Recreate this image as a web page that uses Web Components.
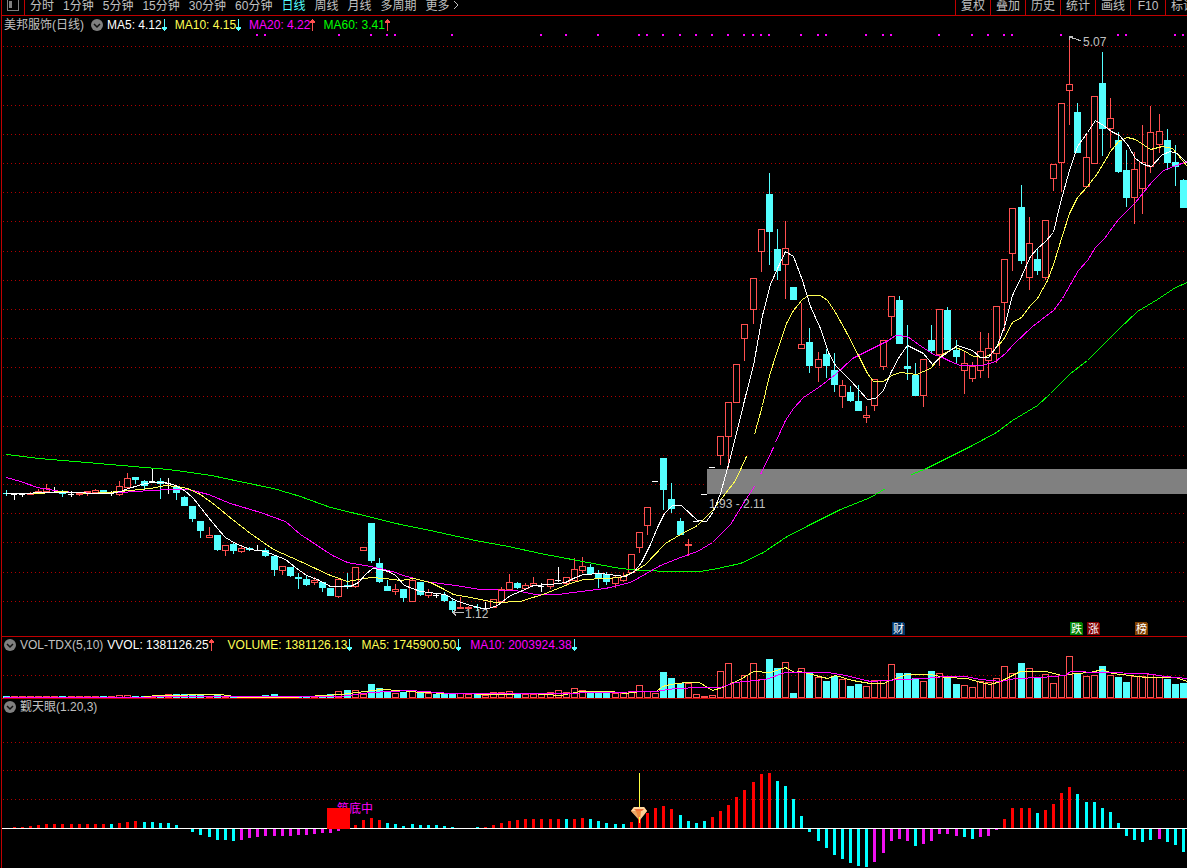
<!DOCTYPE html>
<html lang="zh-CN">
<head>
<meta charset="utf-8">
<title>美邦服饰(日线)</title>
<style>
html, body { margin: 0; background: #000; }
body { font: 12px/12px "Liberation Sans", "Noto Sans CJK SC", sans-serif; color: #c0c0c0; overflow-x: hidden; }
</style>
</head>
<body>
<tdx-app></tdx-app>
<script>
const RED = '#ff5050', CYAN = '#54ffff', WHITE = '#ffffff', YELLOW = '#ffff54', MAG = '#ff00ff', GREEN = '#00ff00';
const slotX = i => Math.floor(6.05 + 8.12 * i);

/* price bars: kind, high, body top, body bottom, low */
const BARS = `c490 493 494 496,w494 494 495 500,w494 494 495 497,r492 493 495 495,r489 491 493 493,r484 488 492 492,w487 492 493 493,c490 491 494 497,w491 494 495 497,r493 493 495 496,r491 491 493 496,r489 490 493 493,c490 490 493 494,w491 493 494 496,r481 486 495 496,r473 478 488 488,c477 477 480 484,c480 481 486 490,w468 481 482 482,c478 481 484 499,
w478 483 484 494,c486 486 493 500,c496 497 506 506,c506 506 519 522,c521 521 531 538,r527 535 538 538,c535 535 550 551,r545 545 551 556,c542 544 551 554,r545 548 552 553,c547 548 550 551,w545 550 551 551,c548 550 556 557,c555 556 570 576,r566 566 571 575,c567 567 576 577,c573 577 579 589,c575 579 585 586,r577 580 583 585,c582 582 588 592,
c588 588 596 596,r579 579 597 598,c573 585 587 589,r567 567 587 588,r547 547 551 551,c523 523 561 563,c558 563 582 583,c580 586 591 591,r584 589 592 595,c589 589 598 602,r579 580 602 602,c582 582 595 596,r589 592 596 598,w593 595 596 598,c592 595 601 602,c598 601 610 613,r597 607 609 609,r606 607 609 609,c604 607 608 611,w602 608 609 609,
r599 599 608 608,r587 589 602 602,r574 582 590 590,c582 583 588 589,r583 585 589 590,r577 583 586 586,w583 586 587 592,r579 579 587 589,w567 580 581 582,r577 577 584 586,r558 569 581 581,r557 566 571 573,c564 567 574 575,c570 573 579 588,c572 574 582 585,r575 577 584 588,r573 576 581 582,r554 554 573 573,r532 532 548 553,r507 507 526 535,
w481 481 482 482,c458 458 490 510,c483 499 509 513,c518 521 535 535,r539 544 546 556,w521 521 522 522,w494 494 495 495,w467 467 468 468,r436 436 456 465,r402 402 437 468,r364 364 403 403,r324 324 339 361,r278 278 310 324,r229 229 252 272,c173 194 232 265,c229 249 271 280,r221 248 265 299,c287 287 300 300,r303 344 349 349,c328 342 366 373,
r352 359 368 382,c349 354 366 378,c353 370 385 392,r380 385 397 408,c386 392 401 402,c385 401 411 411,r406 415 418 423,r379 379 406 411,r340 340 367 370,r296 296 317 336,c296 300 344 344,c325 366 369 380,c363 375 396 396,r359 359 396 407,c325 340 351 353,r309 309 355 366,c307 310 350 350,c340 350 357 363,r351 363 371 394,r362 366 379 382,
r332 351 371 378,r333 348 361 378,r306 306 354 363,r259 259 303 331,r208 208 254 271,c185 207 261 264,r217 243 278 290,c249 259 271 275,r220 220 278 280,r164 164 179 191,r103 103 163 192,r38 84 91 125,c103 112 153 153,r135 157 187 187,r96 96 164 164,c52 83 129 156,r98 118 129 148,c132 140 172 173,c150 170 198 207,r152 169 198 224,
r125 162 189 214,r106 132 167 173,r114 131 145 153,c129 140 163 170,c145 162 167 186,c179 180 208 208`
  .split(',').map(s => { s = s.trim(); return [s[0], ...s.slice(1).split(' ').map(Number)]; });

/* volume bars: y of each bar's top */
const VOLS = `696 696 696 696 696 696 696 696 696 696 696 696 696 696 695 695 696 696 696 696 694 694 694 695 695 696 695 696 696 696 696 696 695 694 696 696 696 696 696 696
694 691 690 690 694 684 688 691 693 692 691 692 693 694 693 693 693 694 694 695 692 692 691 694 694 694 694 692 690 692 688 690 692 692 693 693 693 692 685 691
693 672 678 683 683 694 696 695 671 663 682 675 663 679 659 668 662 693 668 672 677 681 676 679 686 684 686 680 680 664 673 673 678 681 671 673 676 684 685 687
681 682 678 666 673 663 668 678 674 683 675 656 674 676 675 666 675 677 682 676 676 674 677 679 684 683`.split(/\s+/).map(Number);

/* oscillator: height in px with colour (r red, c cyan, m magenta) */
const OSC = `r0 r1 r1 r2 r3 r4 r4 r4 r4 r4 r4 r4 r4 c4 r5 r6 r7 c6 c6 c5 c5 c3 c0 c-3 c-6 c-8 c-11 c-11 c-12 m-11 m-9 m-8 m-7 m-7 m-7 m-7 m-6 m-6 m-5 m-4 m-4 m-2 r0 r3 r8 r10 r8 c5 c4 c2 c4 c3 c3 c3 c2 c1 c0 c0 c1 r1 r3 r5 r7 r8 r9 r9 r9 r9 r9 c9 r9 r10 c9 c7 c5 c4 c4 r6 r10 r15
r20 r22 r19 c13 c7 c5 c7 r11 r17 r23 r31 r38 r46 r54 r55 c47 c42 c29 c12 c-3 c-12 c-19 c-26 c-30 c-34 c-37 c-38 m-33 m-24 m-12 m-10 m-12 c-17 m-15 m-12 m-5 m-5 m-7 c-8 c-10 m-8 m-7 m-1 r9 r20 r20 r20 c15 r18 r24 r35 r41 c34 c26 c26 c20 c16 c5 c-7 c-11 c-13 c-11 m-10 c-13 c-16 c-23`
  .split(/\s+/).map(s => [s[0], Number(s.slice(1))]);

const PRICE_LINES = [
  [GREEN, '6,454 38,458 75,461 109,464 133,466 168,469 190,472 211,475 239,481 273,488 300,496 330,507 355,513 400,524 430,530 475,540 508,546 540,553 598,564 620,568 640,570 672,571 700,571 717,568 740,563 763,552 785,537 810,524 840,509 870,497 885,488'],
  [GREEN, '911,474 926,468 970,446 996,432 1012,420 1037,405 1050,393 1070,373 1087,360 1118,329 1137,311 1157,299 1175,287 1187,282'],
  [MAG, '6,477 20,481 37,487 60,491 95,493 120,492 150,490 170,489 188,489 208,494 230,503 260,512 285,521 300,534 332,555 347,562 370,566 392,571 403,575 425,581 455,585 480,589 515,590 535,594 558,594 580,591 605,588 630,582 660,565 680,557 697,551 712,542 730,524 746,498 754,486'],
  [MAG, '760,474 773,447'],
  [MAG, '775,442 785,420 793,408 803,397 818,387 835,374 852,358 868,350 888,340 895,335 907,336 918,344 933,354 940,356 950,361 960,365 982,365 995,361 1005,353 1013,344 1032,326 1053,310 1062,298 1078,270 1087,260 1095,247 1104,238 1112,227 1118,219 1135,202 1151,182 1163,170 1173,166 1187,161'],
  [YELLOW, '6,493 40,493 60,491 90,493 120,491 150,488 165,485 175,486 187,488 200,494 215,505 232,519 250,533 273,549 300,561 315,568 330,575 347,581 370,577 385,578 400,580 413,578 430,582 442,588 453,594 470,597 495,602 520,601 545,593 570,583 583,579 605,578 620,577 634,571 645,564 665,543 680,534 697,525 712,510 735,480 746,456'],
  [YELLOW, '754,434 762,405 769,375 777,350 786,323 793,310 802,299 808,295 820,295 827,300 835,312 845,330 858,355 867,373 873,381 883,381 891,375 900,372 916,374 930,368 942,354 955,347 963,350 973,356 983,357 990,354 1003,339 1012,322 1021,317 1030,305 1037,298 1047,280 1053,264 1062,235 1069,213 1077,197 1087,186 1097,173 1110,151 1118,141 1127,137 1135,139 1150,149 1162,146 1172,148 1187,166'],
  [WHITE, '6,493 60,492 110,493 120,491 128,488 145,483 152,482 165,482 175,485 184,490 193,498 208,517 217,528 225,537 235,543 250,549 265,551 275,555 285,559 295,567 306,575 317,579 330,586 350,586 358,582 365,574 372,568 380,569 388,571 395,575 404,585 420,591 445,594 455,600 467,604 485,609 497,605 510,595 520,591 533,585 550,584 565,582 575,577 583,574 600,573 625,576 634,571 641,562 650,544 657,527 664,513 672,505 681,505 697,520 706,521 713,511 720,493 727,468 735,437 744,400 753,365 762,315 770,284 778,266 785,251 793,256 802,280 810,306 820,328 828,352 835,365 850,380 867,399 875,398 883,390 890,373 899,356 907,345 923,353 932,364 940,357 950,350 957,345 972,350 980,357 988,357 997,345 1004,326 1012,295 1022,274 1030,256 1037,248 1045,241 1053,232 1060,202 1069,170 1077,146 1087,132 1095,120 1103,125 1111,131 1119,135 1127,144 1135,158 1143,164 1151,166 1162,154 1170,151 1177,153 1187,163']
];
const VOL_LINES = [
  [YELLOW, '4,697 140,697 155,695 220,694 240,697 290,697 340,694 365,691 380,689 400,690 420,692 450,693 500,694 530,693 560,695 580,691 611,691 625,693 640,691 656,691 662,686 670,684 685,682 699,682 712,690 722,687 740,679 753,671 770,672 785,667 794,672 800,671 815,675 827,678 835,675 852,680 870,683 883,683 890,680 907,674 930,674 945,677 967,678 980,682 990,684 1000,681 1020,671 1045,671 1062,675 1075,673 1090,672 1102,669 1112,673 1130,675 1145,677 1175,677 1187,681'],
  [MAG, '4,697 300,696 340,696 370,692 410,690 450,693 500,693 560,693 600,692 655,691 675,688 700,687 720,687 735,682 765,679 785,672 827,672 845,675 870,681 900,679 925,678 945,676 965,676 980,679 1000,681 1015,678 1040,677 1065,675 1070,671 1100,672 1145,673 1165,676 1187,678']
];
const SIGNAL_DOTS = [256,264,338,370,386,394,451,540,565,597,638,646,662,679,695,711,727,743,752,760,768,800,817,825,865,882,890,938,971,987,1003,1011,1060,1117,1125,1174,1182];

const rect = (x, y, w, h, f) => `<rect x="${x}" y="${y}" width="${w}" height="${h}" fill="${f}"/>`;
const hollow = (x, y, w, h) => h < 3 ? rect(x, y, w, h, RED) : rect(x, y, w, h, RED) + rect(x + 1, y + 1, w - 2, h - 2, '#000');
const grid = ys => ys.map(y => `<path d="M3 ${y + .5}H1187" stroke="#b00000" stroke-dasharray="1 3"/>`).join('');
const lines = list => list.map(([c, p]) => `<polyline points="${p}" fill="none" stroke="${c}" transform="translate(.5 .5)"/>`).join('');
const svg = (top, height, label, body) => `<style>
  :host { display: block; }
  svg { display: block; width: 100%; height: auto; font: 12px "Liberation Sans", "Noto Sans CJK SC", sans-serif; }
  </style><svg viewBox="2 ${top} 1185 ${height}" role="img" aria-label="${label}" shape-rendering="crispEdges">${body}</svg>`;

function define(name, render) {
  customElements.define(name, class extends HTMLElement {
    connectedCallback() {
      if (!this.shadowRoot) this.attachShadow({ mode: 'open' }).innerHTML = render(this);
    }
  });
}

define('tdx-kline', () => {
  const bars = BARS.map(([k, hi, t, b, lo], i) => {
    const x = slotX(i), c = k === 'r' ? RED : k === 'c' ? CYAN : WHITE;
    const wick = rect(x, hi, 1, lo - hi, c);
    return wick + (k === 'r' ? hollow(x - 3, t, 7, b - t) : rect(x - 3, t, k === 'w' ? 6 : 7, b - t, c));
  }).join('');
  const badge = (x, c, s) => `<path d="M${x} 622h11l2 2v11h-13z" fill="${c}"/><text x="${x + 1}" y="633" font-size="11" fill="#fff">${s}</text>`;
  return svg(34, 602, '日线',
    grid([46,75,105,134,163,192,221,251,280,309,338,367,396,426,455,484,513,542,572,601]) +
    SIGNAL_DOTS.map(x => rect(x, 34, 2, 2, MAG)).join('') +
    rect(707, 469, 480, 25, '#808080') + bars + lines(PRICE_LINES) +
    `<g fill="#c0c0c0"><text x="1083" y="46">5.07</text><text x="709" y="508">1.93 - 2.11</text><text x="465" y="618">1.12</text></g>
    <g fill="none" stroke="#c0c0c0"><path d="M1069.500 40V36.500H1073M1070 37.500L1075 38.500L1081 41"/><path d="M464 612.500H453M456 609.500L453 612.500L456 615.500"/></g>` +
    badge(892, '#003468', '财') + badge(1070, '#008000', '跌') + badge(1087, '#800000', '涨') + badge(1135, '#804000', '榜'));
});

define('tdx-volume', () => svg(654, 44, 'VOL-TDX', grid([675]) +
  VOLS.map((y, i) => {
    const x = slotX(i) - 3;
    return BARS[i][0] === 'c' || i === 53 ? rect(x, y, 7, 698 - y, CYAN) : hollow(x, y, 7, 698 - y);
  }).join('') + lines(VOL_LINES)));

define('tdx-osc', () => svg(716, 152, '觐天眼', grid([742, 770, 799]) +
  OSC.map(([k, v], i) => rect(slotX(i) - 1, v > 0 ? 828 - v : 829, 3, Math.abs(v), { r: '#f00', c: '#0ff', m: '#f010f0' }[k])).join('') +
  rect(2, 828, 1185, 1, '#fff') +
  `<text x="337" y="813" fill="${MAG}">筑底中</text>` + rect(327, 808, 23, 21, '#f00') +
  rect(639, 773, 1, 50, '#ffff40') +
  `<g shape-rendering="auto"><path d="M634 807H644L647 811L639.500 820L631 811Z" fill="#f08a3c"/>
   <path d="M634 807H644L647 811H631Z" fill="#ffd9a0"/><path d="M634 809H644L642 811H636Z" fill="#f0703a"/>
   <path d="M631 811L639 820L636 811Z" fill="#e8a868"/><path d="M641 811H647L640 820Z" fill="#f8d098"/></g>` + rect(639, 817, 1, 6, '#ffff40')));

define('tdx-value', el => `<style>
  :host { display: inline-flex; align-items: center; white-space: nowrap; }
  svg { display: block; }
  </style><slot></slot><svg width="5" height="12" viewBox="0 0 5 12" shape-rendering="crispEdges" aria-hidden="true">${
    el.getAttribute('dir-to') === 'up'
      ? `<path d="M2 0h1v1h1v1h1v2H3v8H2V4H0V2h1V1h1z" fill="${RED}"/>`
      : `<path d="M2 0h1v8h2v2H4v1H3v1H2v-1H1v-1H0V8h2z" fill="${CYAN}"/>`}</svg>`);

define('tdx-panel', () => `<style>
  :host { display: block; margin-left: 1px; border-left: 1px solid #c00000; }
  :host([ruled]) { border-top: 1px solid #c00000; }
  header { box-sizing: border-box; display: flex; align-items: center; height: 18px; padding-left: 2px; white-space: nowrap; overflow: hidden; }
  .lead { display: flex; align-items: center; gap: 7px; margin-right: 4px; }
  ::slotted([slot=value]) { margin-right: 8px; }
  :host([ruled]) header { height: 17px; padding-bottom: 2px; }
  :host([ruled]) .lead { flex-direction: row-reverse; gap: 4px; }
  :host([ruled]) ::slotted([slot=value]) { margin-right: 9px; }
  button { display: block; padding: 0; border: 0; background: none; width: 12px; height: 12px; }
  button svg { display: block; }
  </style><header><span class="lead"><slot name="title"></slot><button type="button" aria-label="菜单"><svg width="12" height="12" viewBox="0 0 12 12"><circle cx="6" cy="6" r="6" fill="#808080"/><path d="M3 5L6 8L9 5" fill="none" stroke="#111" stroke-width="1.500"/></svg></button></span><slot name="value"></slot></header><slot></slot>`);

define('tdx-toolbar', () => {
  const tabs = ['分时','1分钟','5分钟','15分钟','30分钟','60分钟','日线','周线','月线','多周期'];
  const tools = ['复权','叠加','历史','统计','画线','F10','标记'];
  return `<style>
  :host { display: flex; height: 15px; border-bottom: 1px solid #c00000; margin-left: 1px; border-left: 1px solid #c00000; }
  button { flex: none; padding: 0; border: 0; background: none; color: #c0c0c0; font: inherit; height: 15px; line-height: 13px; display: flex; align-items: flex-start; justify-content: center; white-space: nowrap; }
  .side { width: 23px; border-right: 1px solid #c00000; }
  .side svg { display: block; }
  nav { display: flex; flex: 1; gap: 9px; padding-left: 5px; min-width: 0; }
  .on { color: #54ffff; }
  .more { gap: 3px; }
  .tools { display: flex; width: 232px; overflow: hidden; }
  .tools button { width: 35px; border-left: 1px solid #c00000; }
  </style><button class="side" type="button" aria-label="侧栏"><svg width="12" height="11" viewBox="0 0 12 11" shape-rendering="crispEdges"><rect x="0" y="-2" width="11" height="12" fill="none" stroke="#808080"/><rect x="2" y="1" width="3" height="7" fill="#808080"/></svg></button>
  <nav>${tabs.map(t => `<button type="button"${t === '日线' ? ' class="on"' : ''}>${t}</button>`).join('')}<button type="button" class="more">更多<svg width="6" height="11" viewBox="0 0 6 11"><path d="M1 1L5 5L1 9" fill="none" stroke="#c0c0c0"/></svg></button></nav>
  <div class="tools">${tools.map(t => `<button type="button">${t}</button>`).join('')}</div>`;
});

define('tdx-app', () => `<style>
  :host { display: block; background: #000; }
  .w { color: #fff; } .y { color: #ffff54; } .m { color: #f0f; } .g { color: #0f0; }
  .gap { margin-right: 14px; }
  </style>
  <tdx-toolbar></tdx-toolbar>
  <tdx-panel>
    <span slot="title">美邦服饰(日线)</span>
    <tdx-value slot="value" class="w">MA5: 4.12</tdx-value>
    <tdx-value slot="value" class="y">MA10: 4.15</tdx-value>
    <tdx-value slot="value" class="m" dir-to="up">MA20: 4.22</tdx-value>
    <tdx-value slot="value" class="g" dir-to="up">MA60: 3.41</tdx-value>
    <tdx-kline></tdx-kline>
  </tdx-panel>
  <tdx-panel ruled>
    <span slot="title">VOL-TDX(5,10)</span>
    <tdx-value slot="value" class="w gap" dir-to="up">VVOL: 1381126.25</tdx-value>
    <tdx-value slot="value" class="y">VOLUME: 1381126.13</tdx-value>
    <tdx-value slot="value" class="y">MA5: 1745900.50</tdx-value>
    <tdx-value slot="value" class="m">MA10: 2003924.38</tdx-value>
    <tdx-volume></tdx-volume>
  </tdx-panel>
  <tdx-panel ruled>
    <span slot="title">觐天眼(1.20,3)</span>
    <tdx-osc></tdx-osc>
  </tdx-panel>`);
</script>
</body>
</html>
